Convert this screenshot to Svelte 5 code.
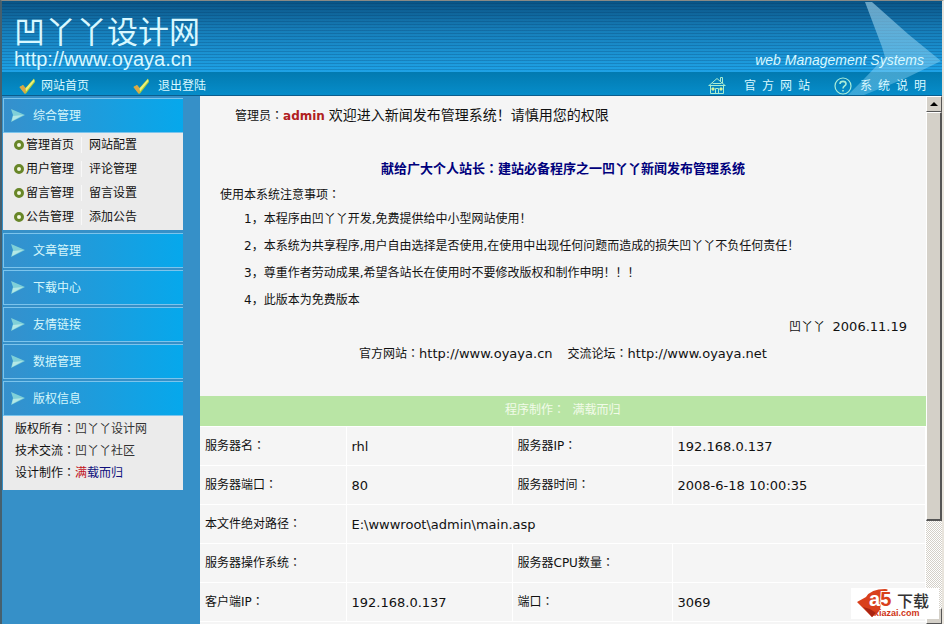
<script lang="ts">
  type Row = { label: string; value: string; label2?: string; value2?: string };

  const quick = ['网站首页', '退出登陆'];

  const submenu = [
    ['管理首页', '网站配置'],
    ['用户管理', '评论管理'],
    ['留言管理', '留言设置'],
    ['公告管理', '添加公告'],
  ];

  const sections = ['文章管理', '下载中心', '友情链接', '数据管理', '版权信息'];

  const notes = [
    '本程序由凹丫丫开发,免费提供给中小型网站使用！',
    '本系统为共享程序,用户自由选择是否使用,在使用中出现任何问题而造成的损失凹丫丫不负任何责任！',
    '尊重作者劳动成果,希望各站长在使用时不要修改版权和制作申明！！！',
    '此版本为免费版本',
  ];

  const rows: Row[] = [
    { label: '服务器名', value: 'rhl', label2: '服务器IP', value2: '192.168.0.137' },
    { label: '服务器端口', value: '80', label2: '服务器时间', value2: '2008-6-18 10:00:35' },
    { label: '本文件绝对路径', value: 'E:\\wwwroot\\admin\\main.asp' },
    { label: '服务器操作系统', value: '', label2: '服务器CPU数量', value2: '' },
    { label: '客户端IP', value: '192.168.0.137', label2: '端口', value2: '3069' },
  ];
</script>

{#snippet colon()}<span class="colon">：</span>{/snippet}

{#snippet section(name: string)}
  <a class="section" href="#menu">
    <svg width="14" height="13" viewBox="0 0 14 13" aria-hidden="true">
      <path d="M0 0 L14 6 L0 13 L2 6 Z" fill="#7fd0d8" />
      <path d="M1 12 L2 7 L12 6 Z" fill="#b4e8e6" />
    </svg>
    {name}
  </a>
{/snippet}

<div class="page">
  <header>
    <div class="banner">
      <div class="logo">
        <div class="name">凹丫丫设计网</div>
        <div class="url">http://www.oyaya.cn</div>
      </div>
      <em>web Management Systems</em>
    </div>
    <nav class="bar">
      {#each quick as q (q)}
        <a class="quick" href="#top">
          <svg width="17" height="16" viewBox="0 0 17 16" aria-hidden="true">
            <path d="M0.5 9 L4 7 L6.5 10 L15 0.5 L16 4 L7 15.5 L5.5 15.5 Z" fill="#a9cc3a" />
            <path d="M0.5 9 L4 7 L6.5 10 L6.5 15.5 L5.5 15.5 Z" fill="#dba648" />
            <path d="M6.5 10.5 L15 1 L15.5 3 L7 13.5 Z" fill="#eef07a" />
          </svg>
          {q}
        </a>
      {/each}
      <a class="wide first" href="#home">
        <svg width="18" height="19" viewBox="0 0 18 19" fill="none" stroke="#a9ecd0" aria-hidden="true">
          <path d="M1 9.5 L9 2.5 L17 9.5 M0.5 9.5 H17.5 M2.5 10 V17.5 H15.5 V10 M7.5 17.5 V12.5 H10.5 V17.5 M12.5 5 V1.5 H14.5 V7 M4.5 7.5 H13.5" />
          <path d="M4 12 H6 V14 H4 Z M12 12 H14 V14 H12 Z" fill="#d7f29a" stroke="#d7f29a" />
        </svg>
        官&ensp;方&ensp;网&ensp;站
      </a>
      <a class="wide" href="#help">
        <svg width="18" height="18" viewBox="0 0 18 18" fill="none" stroke="#a9ecd8" stroke-width="1.2" aria-hidden="true">
          <circle cx="9" cy="9" r="8" />
          <path d="M6 7 C6 3.5 12 3.5 12 7 C12 9 9 9 9 11.5 M9 13 V14.5" stroke-width="1.6" />
        </svg>
        系&ensp;统&ensp;说&ensp;明
      </a>
    </nav>
    <svg class="star" width="100" height="94" viewBox="0 0 100 94" aria-hidden="true">
      <defs>
        <linearGradient id="shine" x1="0" y1="0" x2="0" y2="1">
          <stop offset="0" stop-color="#a8d8ee" stop-opacity="0.6" />
          <stop offset="0.6" stop-color="#9bdcf8" stop-opacity="0.45" />
          <stop offset="1" stop-color="#9bdcf8" stop-opacity="0.35" />
        </linearGradient>
      </defs>
      <path d="M23 1 L30 1 L66 33 L99 60 L62 78 L22 94 L6 94 L22 78 L43 56 L40 46 Z" fill="url(#shine)" />
    </svg>
  </header>

  <div class="body">
    <aside>
      {@render section('综合管理')}
      <ul>
        {#each submenu as [a, b] (a)}
          <li>
            <i></i>
            <a href="#menu">{a}</a>
            <a class="second" href="#menu">{b}</a>
          </li>
        {/each}
      </ul>
      {#each sections as s (s)}
        {@render section(s)}
      {/each}
      <div class="about">
        <div>版权所有{@render colon()}<span class="soft">凹丫丫设计网</span></div>
        <div>技术交流{@render colon()}<span class="soft">凹丫丫社区</span></div>
        <div>设计制作{@render colon()}<span class="red">满</span><span class="navy">载而归</span></div>
      </div>
    </aside>

    <main>
      <p class="welcome">管理员{@render colon()}<b>admin</b> <span>欢迎进入新闻发布管理系统！请慎用您的权限</span></p>
      <h1>献给广大个人站长{@render colon()}建站必备程序之一凹丫丫新闻发布管理系统</h1>
      <p class="lead">使用本系统注意事项{@render colon()}</p>
      <ol>
        {#each notes as n, i (i)}
          <li>{i + 1}，{n}</li>
        {/each}
      </ol>
      <p class="sign">凹丫丫&nbsp; <span class="latin">2006.11.19</span></p>
      <p class="links">
        <span>官方网站{@render colon()}<a class="latin" href="#site">http://www.oyaya.cn</a></span>
        <span>交流论坛{@render colon()}<a class="latin" href="#forum">http://www.oyaya.net</a></span>
      </p>
      <table>
        <colgroup><col class="c1" /><col class="c2" /><col class="c3" /><col /></colgroup>
        <thead>
          <tr><th colspan="4">程序制作{@render colon()}&nbsp; 满载而归</th></tr>
        </thead>
        <tbody>
          {#each rows as r (r.label)}
            <tr>
              <td>{r.label}{@render colon()}</td>
              {#if r.label2}
                <td class="val latin">{r.value}</td>
                <td>{r.label2}{@render colon()}</td>
                <td class="val latin">{r.value2}</td>
              {:else}
                <td class="val latin" colspan="3">{r.value}</td>
              {/if}
            </tr>
          {/each}
        </tbody>
      </table>
    </main>

    <div class="scroll">
      <button aria-label="向上滚动"></button>
      <div class="thumb"></div>
      <button class="down" aria-label="向下滚动"></button>
    </div>
  </div>

  <div class="badge">
    <svg width="42" height="30" viewBox="0 0 42 30" aria-hidden="true">
      <path d="M1 14 L10 9 Q15 1 29 1 Q33 1 31 3 Q27 3 26 7 L24 22 L16 29 Z" fill="#d9401c" />
      <path d="M7 19 L14 21 L20 25 L16 29 Z" fill="#a92412" />
      <text x="13" y="18" class="mark">a<tspan class="five">5</tspan></text>
    </svg>
    <span class="dl">下载</span>
    <span class="site">xiazai.com</span>
  </div>
</div>

<style>
  :global(body) { background: #3690c8; overflow: hidden; }
  .page {
    position: relative;
    display: flex;
    flex-direction: column;
    height: 100vh;
    box-sizing: border-box;
    overflow: hidden;
    border-top: 1px solid #8a8a86;
    border-left: 2px solid #46606e;
    border-right: 2px solid #e8e4dc;
    font: 12px/22px "DejaVu Sans", "Noto Sans CJK SC", sans-serif;
    color: #111;
  }
  a { color: inherit; text-decoration: none; }
  p, h1, ul, ol { margin: 0; padding: 0; list-style: none; }
  .colon { font-family: "Noto Sans CJK TC", sans-serif; line-height: 1; }
  .latin { font-size: 13px; }

  header { position: relative; flex: none; color: #d9f8ff; }
  .banner {
    display: flex;
    justify-content: space-between;
    align-items: flex-end;
    height: 71px;
    padding: 0 18px 0 12px;
    box-sizing: border-box;
    background:
      repeating-linear-gradient(transparent 0 2px, rgba(0, 40, 80, 0.2) 2px 3px),
      linear-gradient(#0a5486, #167db8 40%, #1ea2e6);
  }
  .star { position: absolute; right: 0; top: 0; pointer-events: none; }
  .name { font: 31px/36px "Noto Sans CJK SC", sans-serif; }
  .url { font: 20px/22px "Liberation Sans", sans-serif; margin-bottom: 2px; }
  em { position: relative; z-index: 1; font: italic 14px/24px "Liberation Sans", sans-serif; }
  .bar {
    display: flex;
    align-items: center;
    height: 24px;
    box-sizing: border-box;
    padding: 4px 16px 0 17px;
    border-bottom: 1px solid #0b5d8d;
    background: linear-gradient(#027ab0, #068dca);
  }
  .quick { display: flex; align-items: center; gap: 5px; width: 114px; }
  .quick + .quick { gap: 8px; }
  .wide { position: relative; z-index: 1; display: flex; align-items: center; gap: 8px; }
  .wide.first { margin-left: auto; margin-right: 24px; gap: 18px; }

  .body { display: flex; flex: 1; min-height: 0; }
  aside { width: 198px; flex: none; background: #3690c8; box-sizing: border-box; padding: 2px 17px 0 1px; }
  .section {
    display: flex;
    align-items: center;
    gap: 8px;
    height: 35px;
    margin-bottom: 2px;
    padding-left: 7px;
    box-sizing: border-box;
    border: 1px solid #7cc4ec;
    border-right: none;
    background: linear-gradient(90deg, #3690cc, #06a8ec);
    color: #d4f6fb;
  }
  ul { background: #ebebeb; margin: -2px 0 3px; padding-bottom: 1px; }
  ul li { display: flex; align-items: center; height: 24px; padding-left: 11px; }
  ul i { width: 4px; height: 4px; border: 3px solid #688628; border-radius: 50%; background: #f4f8e0; margin-right: 2px; }
  .second { border-left: 1px solid #f8f8f8; margin-left: 7px; padding-left: 7px; line-height: 16px; }
  .about { background: #ebebeb; margin-top: -2px; padding: 2px 12px 6px; }
  .about div { height: 22px; }
  .soft { color: #333; }
  .red { color: #c1121c; }
  .navy { color: #10107c; }

  main { flex: 1; min-width: 0; background: #f5f5f5; overflow: hidden; }
  .welcome { padding: 8px 0 0 35px; }
  .welcome b { color: #b0201f; }
  .welcome span:last-child { font-size: 14px; }
  h1 { font-size: 13px; line-height: 22px; color: #00007c; text-align: center; padding: 31px 0 4px; }
  .lead { padding-left: 20px; }
  ol { padding-left: 44px; line-height: 27px; }
  .sign { height: 27px; text-align: right; padding-right: 19px; line-height: 26px; }
  .links { display: flex; justify-content: center; gap: 15px; height: 27px; line-height: 26px; padding-bottom: 28px; }
  table { width: 100%; border-collapse: collapse; table-layout: fixed; }
  .c1 { width: 146px; }
  .c2 { width: 166px; }
  .c3 { width: 160px; }
  th { height: 30px; padding: 0 0 2px; box-sizing: border-box; font-weight: 400; color: #f2fbe9; background: #b9e5a5; text-align: center; }
  td { height: 39px; box-sizing: border-box; padding: 0 5px; border: 1px solid #fff; border-left: none; }
  td.val { padding-top: 3px; }

  .scroll {
    display: flex;
    flex-direction: column;
    width: 16px;
    flex: none;
    background: repeating-conic-gradient(#fff 0 25%, #d4d0c8 0 50%) 0 0 / 2px 2px;
  }
  .scroll button {
    height: 16px;
    padding: 0;
    border: 1px solid #fff;
    border-right-color: #555;
    border-bottom-color: #555;
    background: #d4d0c8;
  }
  .scroll button::after {
    content: '';
    display: block;
    width: 0;
    margin: auto;
    border: 4px solid transparent;
    border-top: none;
    border-bottom-color: #000;
  }
  .scroll .down { margin-top: auto; }
  .scroll .down::after { border: 4px solid transparent; border-bottom: none; border-top-color: #000; }
  .thumb { height: 409px; box-sizing: border-box; border: 1px solid #fff; border-right: 2px solid #555; border-bottom: 2px solid #555; background: #d4d0c8; }

  .badge {
    position: absolute;
    right: 3px;
    bottom: 5px;
    width: 88px;
    height: 31px;
    padding-left: 5px;
    box-sizing: border-box;
    background: #fff;
  }
  .badge svg { display: block; }
  .mark { font: bold 20px "Liberation Sans", sans-serif; fill: #fff; }
  .five { fill: #d9401c; stroke: #fff; stroke-width: 2px; paint-order: stroke; }
  .dl { position: absolute; left: 46px; top: 4px; font: 500 16px/16px "Noto Sans CJK SC", sans-serif; color: #333; }
  .site { position: absolute; left: 23px; top: 21px; font: bold 9px/9px "Liberation Sans", sans-serif; color: #cf3518; }
</style>
